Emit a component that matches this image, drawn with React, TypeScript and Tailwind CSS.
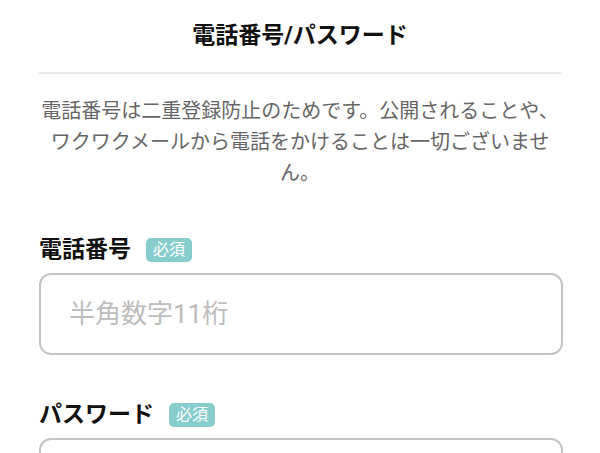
import React from "react";

function Badge() {
  return (
    <span className="flex h-[24px] w-[46px] items-center justify-center rounded-[5px] bg-[#87cdcd] text-[16px] leading-none text-white">
      必須
    </span>
  );
}

function Field({ label, placeholder, mt }: { label: string; placeholder?: string; mt: string }) {
  return (
    <div className={mt}>
      <div className="flex h-[30px] items-center gap-[15px]">
        <span className="text-[23px] font-bold leading-[30px] text-[#111]">{label}</span>
        <Badge />
      </div>
      <div className="mt-[8px] mr-[-2px] flex h-[82px] items-center rounded-[12px] border-2 border-[#c4c4c4] px-[28px]">
        {placeholder ? (
          <span className="text-[26px] leading-none text-[#bdbdbd]">{placeholder}</span>
        ) : null}
      </div>
    </div>
  );
}

export default function App() {
  return (
    <div
      className="h-[453px] w-[600px] overflow-hidden bg-white px-[39px]"
      style={{ fontFamily: 'Roboto, "Noto Sans CJK JP", sans-serif' }}
    >
      <h1 className="pt-[21px] text-center text-[23px] font-bold leading-[30px] text-[#111]">
        電話番号/パスワード
      </h1>
      <div className="mt-[21px] h-[2px] w-[522px] bg-[#e8e8e8]" />
      <p className="mt-[22px] text-center text-[20px] leading-[31px] text-[#666]">
        電話番号は二重登録防止のためです。公開されることや、ワクワクメールから電話をかけることは一切ございません。
      </p>
      <Field label="電話番号" placeholder="半角数字11桁" mt="mt-[46px]" />
      <Field label="パスワード" mt="mt-[45px]" />
    </div>
  );
}
